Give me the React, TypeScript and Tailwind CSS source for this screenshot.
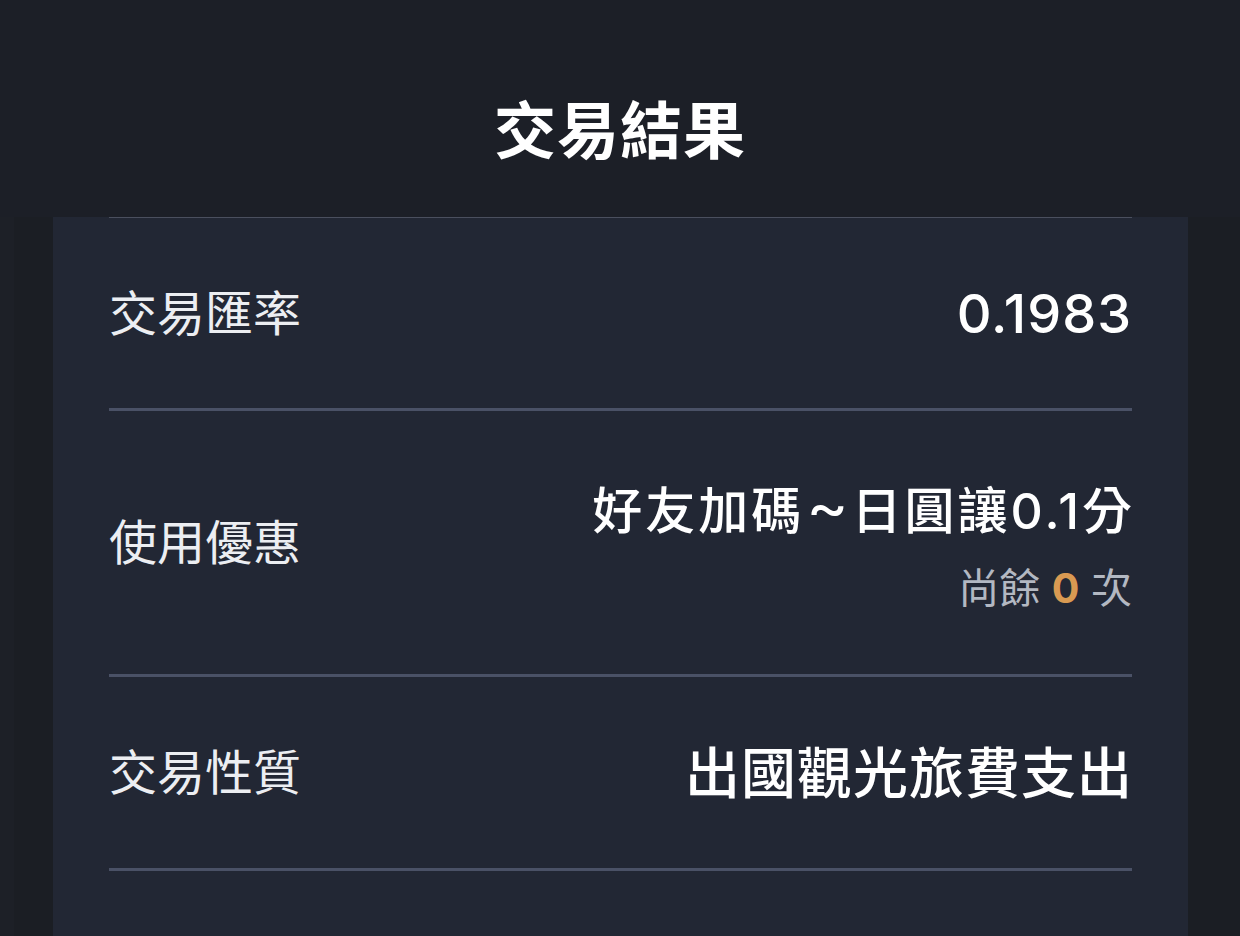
const font = {
  fontFamily: '"Inter", "Noto Sans CJK TC", sans-serif',
};

export default function App() {
  return (
    <div className="w-[1240px] h-[936px] overflow-hidden bg-[#1b1e24]" style={font}>
      {/* header */}
      <div className="h-[217px] bg-[#1c1f27] flex justify-center pt-[96px]">
        <p className="text-[62px] leading-[72px] font-bold text-white tracking-[1px]">交易結果</p>
      </div>
      <div className="flex">
        <div className="w-[14px] bg-[#1d2027]"></div>
        <div className="w-[39px]"></div>
        <div className="w-[1135px] h-[719px] bg-[#222734] px-[56px]">
          <div className="border-t border-t-[#4a4f5e]"></div>
          {/* rate */}
          <div className="h-[193px] flex items-center justify-between border-b-[3px] border-b-[#4a5166]">
            <p className="text-[48px] leading-[56px] text-[#eceef2] pt-[2px]">交易匯率</p>
            <p className="text-[54px] leading-[60px] text-white font-medium tracking-[1px] pt-[2px]">0.1983</p>
          </div>
          {/* coupon */}
          <div className="h-[266px] flex items-center justify-between border-b-[3px] border-b-[#4a5166]">
            <p className="text-[48px] leading-[56px] text-[#eceef2]">使用優惠</p>
            <div className="flex flex-col items-end pt-[2px]">
              <p className="text-[50px] leading-[60px] text-white font-medium tracking-[3px] mr-[-3px]">
                好友加碼<span className="text-[64px] leading-[0] font-normal tracking-[1px] mx-[2px]">~</span>日圓讓0.1分
              </p>
              <p className="text-[41px] leading-[50px] text-[#b3b8c2] mt-[22px] mb-[-6px]">
                尚餘 <span className="text-[#d99a52] font-bold">0</span> 次
              </p>
            </div>
          </div>
          {/* type */}
          <div className="h-[194px] flex items-center justify-between border-b-[3px] border-b-[#4a5166]">
            <p className="text-[48px] leading-[56px] text-[#eceef2]">交易性質</p>
            <p className="text-[55px] leading-[60px] text-white font-medium tracking-[1px] mr-[-1px]">出國觀光旅費支出</p>
          </div>
        </div>
      </div>
    </div>
  );
}
